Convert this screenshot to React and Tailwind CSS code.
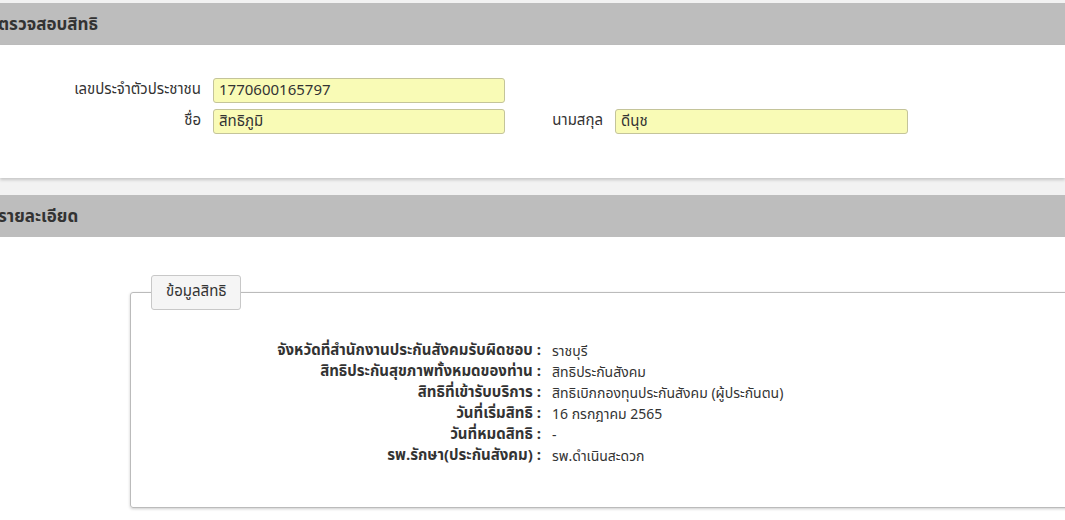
export default function App() {
  const rows = [
    ['จังหวัดที่สำนักงานประกันสังคมรับผิดชอบ', 'ราชบุรี'],
    ['สิทธิประกันสุขภาพทั้งหมดของท่าน', 'สิทธิประกันสังคม'],
    ['สิทธิที่เข้ารับบริการ', 'สิทธิเบิกกองทุนประกันสังคม (ผู้ประกันตน)'],
    ['วันที่เริ่มสิทธิ', '16 กรกฎาคม 2565'],
    ['วันที่หมดสิทธิ', '-'],
    ['รพ.รักษา(ประกันสังคม)', 'รพ.ดำเนินสะดวก'],
  ];

  return (
    <div
      className="w-[1065px] h-[520px] overflow-hidden bg-[#f2f2f2] text-[#333] pt-[3px]"
      style={{ fontFamily: "Tahoma, 'Noto Sans Thai', 'Noto Sans', 'DejaVu Sans', sans-serif" }}
    >
      {/* ตรวจสอบสิทธิ */}
      <div className="h-[42px] bg-[#bdbdbd] flex items-center pt-[3px]">
        <h2 className="-ml-[2px] text-[17px] font-bold">ตรวจสอบสิทธิ</h2>
      </div>
      <div className="h-[133px] bg-white shadow-[0_2px_3px_rgba(0,0,0,0.18)] pt-[33px] text-[15px]">
        <div className="flex items-center h-[25px]">
          <label className="w-[201px] text-right">เลขประจำตัวประชาชน</label>
          <input
            readOnly
            value="1770600165797"
            className="ml-[12px] w-[292px] h-[25px] px-[5px] bg-[#f9fbb6] border border-[#c4c49a] rounded-[3px] text-[15px] outline-none"
          />
        </div>
        <div className="flex items-center h-[25px] mt-[6px]">
          <label className="w-[201px] text-right">ชื่อ</label>
          <input
            readOnly
            value="สิทธิภูมิ"
            className="ml-[12px] w-[292px] h-[25px] px-[5px] bg-[#f9fbb6] border border-[#c4c49a] rounded-[3px] text-[15px] outline-none"
          />
          <label className="w-[98px] text-right">นามสกุล</label>
          <input
            readOnly
            value="ดีนุช"
            className="ml-[12px] w-[293px] h-[25px] px-[5px] bg-[#f9fbb6] border border-[#c4c49a] rounded-[3px] text-[15px] outline-none"
          />
        </div>
      </div>

      {/* รายละเอียด */}
      <div className="mt-[17px] h-[42px] bg-[#bdbdbd] flex items-center pt-[3px]">
        <h2 className="-ml-[2px] text-[17px] font-bold">รายละเอียด</h2>
      </div>
      <div className="h-[300px] bg-white pt-[38px]">
        <fieldset className="ml-[130px] w-[1000px] border border-[#bbb] rounded-[3px] shadow-[0_1px_3px_rgba(0,0,0,0.2)] pb-[40px]">
          <legend className="ml-[20px] px-[14px] h-[35px] flex items-center bg-[#f5f5f5] border border-[#c8c8c8] rounded-[3px] text-[15px]">
            ข้อมูลสิทธิ
          </legend>
          <div className="mt-[31px] text-[14px]">
            {rows.map(([k, v]) => (
              <div key={k} className="flex h-[21px] items-center">
                <div className="w-[410px] text-right font-bold text-[15px]">{k} :</div>
                <div className="pl-[11px]">{v}</div>
              </div>
            ))}
          </div>
        </fieldset>
      </div>
    </div>
  );
}
